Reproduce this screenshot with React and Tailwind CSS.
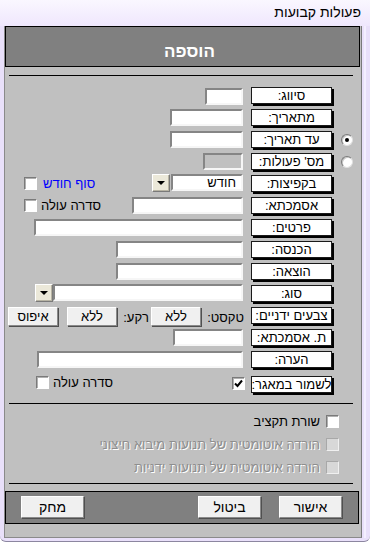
import React from 'react';

function Lbl({ children }) {
  return (
    <div className="mt-[2px] w-[81px] h-[17px] shrink-0 bg-white border border-[#1a1a1a] shadow-[2px_2px_0_#000] flex items-center justify-center text-[13px] leading-none whitespace-nowrap">
      {children}
    </div>
  );
}

function Inp({ cls = '', gray, children }) {
  return (
    <div
      className={`${cls} h-[17px] shrink-0 border-2 border-t-[#858585] border-l-[#858585] border-b-[#f6f6f6] border-r-[#f6f6f6] ${gray ? 'bg-[#c0c0c0]' : 'bg-white'} flex items-center pr-[5px] text-[13px] leading-none`}
    >
      {children}
    </div>
  );
}

function DD({ cls = '' }) {
  return (
    <div className={`${cls} w-[18px] h-[18px] shrink-0 bg-[#ebe8d9] border border-t-white border-l-white border-b-[#7a7a7a] border-r-[#7a7a7a] shadow-[inset_-1px_-1px_0_#b8b4a4] flex items-center justify-center`}>
      <div className="w-0 h-0 border-l-[4px] border-r-[4px] border-t-[4px] border-l-transparent border-r-transparent border-t-black" />
    </div>
  );
}

function Cb({ checked, disabled, cls = '' }) {
  return (
    <div
      className={`${cls} w-[13px] h-[13px] shrink-0 border ${disabled ? 'border-t-[#a8a8a8] border-l-[#a8a8a8] border-b-[#f0f0f0] border-r-[#f0f0f0] bg-[#d8d8d8]' : 'border-t-[#7a7a7a] border-l-[#7a7a7a] border-b-white border-r-white bg-white shadow-[inset_1px_1px_0_#b0b0b0]'} flex items-center justify-center`}
    >
      {checked && (
        <svg width="9" height="9" viewBox="0 0 9 9">
          <path d="M1 4.5 L3.5 7 L8 1.5" fill="none" stroke="#000" strokeWidth="2" />
        </svg>
      )}
    </div>
  );
}

function Radio({ checked }) {
  return (
    <div className="w-[12px] h-[12px] rounded-full bg-white border border-t-[#7a7a7a] border-l-[#7a7a7a] border-b-[#e0e0e0] border-r-[#e0e0e0] shadow-[inset_1px_1px_0_#c8c8c8] flex items-center justify-center">
      {checked && <div className="w-[4px] h-[4px] rounded-full bg-black" />}
    </div>
  );
}

function Btn({ cls = '', children }) {
  return (
    <div className={`${cls} shrink-0 bg-[#f0f0f0] border border-t-white border-l-white border-b-[#8a8a8a] border-r-[#8a8a8a] shadow-[1px_1px_0_#505050] flex items-center justify-center text-[13px] leading-none`}>
      {children}
    </div>
  );
}

function Row({ radio, label, children, cls = '' }) {
  return (
    <div className={`flex h-[22px] items-start ${cls}`}>
      <div className="w-[29px] h-[22px] shrink-0 flex justify-center pt-[5px]">{radio}</div>
      <Lbl>{label}</Lbl>
      {children}
    </div>
  );
}

export default function App() {
  return (
    <div className="w-[370px] h-[545px] overflow-hidden bg-white text-black font-['Liberation_Sans','DejaVu_Sans',sans-serif]">
      <div className="w-[370px] h-[542px] bg-[#e9e0fa] rounded-b-[6px] border-b border-[#8c86a0] flex flex-col">
        <div className="h-[26px] shrink-0 bg-gradient-to-b from-[#faf7ff] to-[#efe7fd] flex items-center justify-end pr-[9px] pb-[3px]">
          <span dir="rtl" className="text-[14px] leading-none">פעולות קבועות</span>
        </div>
        <div className="flex">
          <div dir="rtl" className="ml-[4px] w-[358px] h-[512px] shrink-0 bg-[#c0c0c0] border-l border-r border-b border-l-[#8a8a8a] border-r-[#7a7a7a] border-b-[#8a8a8a] flex flex-col">
            <div className="self-end w-[355px] h-[41px] shrink-0 bg-[#808080] border border-black flex items-center justify-center pt-[9px] pl-[14px]">
              <span className="text-white font-bold text-[17px] leading-none">הוספה</span>
            </div>
            <div className="self-end ml-[4px] w-[344px] h-px bg-black mt-[8px] shrink-0" />

            <div className="mt-[9px] flex flex-col">
              <Row label="סיווג:">
                <Inp cls="mt-[3px] mr-[8px] w-[38px]" />
              </Row>
              <Row label="מתאריך:">
                <Inp cls="mt-[2px] mr-[8px] w-[73px]" />
              </Row>
              <Row label="עד תאריך:" radio={<Radio checked />}>
                <Inp cls="mt-[2px] mr-[8px] w-[73px]" />
              </Row>
              <Row label="מס' פעולות:" radio={<Radio />}>
                <Inp cls="mt-[2px] mr-[8px] w-[40px]" gray />
              </Row>
              <Row label="בקפיצות:" cls="pl-[19px]">
                <Inp cls="mt-[1px] mr-[8px] w-[72px]">חודש</Inp>
                <DD cls="mt-[1px] mr-[1px]" />
                <div className="mr-auto mt-[2px] h-[17px] flex items-center gap-[6px]">
                  <span className="text-[13px] leading-none text-[#0000ff]">סוף חודש</span>
                  <Cb />
                </div>
              </Row>
              <Row label="אסמכתא:" cls="pl-[19px]">
                <Inp cls="mt-[2px] mr-[8px] w-[111px]" />
                <div className="mr-auto mt-[2px] h-[17px] flex items-center gap-[4px]">
                  <span className="text-[13px] leading-none">סדרה עולה</span>
                  <Cb />
                </div>
              </Row>
              <Row label="פרטים:">
                <Inp cls="mt-[2px] mr-[8px] w-[209px]" />
              </Row>
              <Row label="הכנסה:">
                <Inp cls="mt-[2px] mr-[8px] w-[127px]" />
              </Row>
              <Row label="הוצאה:">
                <Inp cls="mt-[2px] mr-[8px] w-[127px]" />
              </Row>
              <Row label="סוג:">
                <Inp cls="mt-[1px] mr-[8px] w-[190px]" />
                <DD cls="mt-[1px]" />
              </Row>
              <Row label="צבעים ידניים:">
                <div className="mt-[2px] mr-[7px] w-[42px] h-[20px] shrink-0 flex items-center text-[13px] leading-none">טקסט:</div>
                <Btn cls="mt-[2px] mr-[1px] w-[50px] h-[19px]">ללא</Btn>
                <div className="mt-[2px] mr-[2px] w-[31px] h-[20px] shrink-0 flex items-center text-[13px] leading-none">רקע:</div>
                <Btn cls="mt-[2px] mr-[1px] w-[50px] h-[19px]">ללא</Btn>
                <Btn cls="mt-[2px] mr-[9px] w-[50px] h-[19px]">איפוס</Btn>
              </Row>
              <Row label="ת. אסמכתא:">
                <Inp cls="mt-[2px] mr-[8px] w-[70px]" />
              </Row>
              <Row label="הערה:">
                <Inp cls="mt-[2px] mr-[8px] w-[206px]" />
              </Row>
              <Row label="לשמור במאגר:" cls="mt-[3px] pl-[31px]">
                <Cb checked cls="mt-[3px] mr-[6px]" />
                <div className="mr-auto mt-[1px] h-[15px] flex items-center gap-[4px]">
                  <span className="text-[13px] leading-none">סדרה עולה</span>
                  <Cb />
                </div>
              </Row>
            </div>

            <div className="self-end ml-[4px] w-[344px] h-px bg-black mt-[7px] shrink-0" />

            <div className="mt-[6px] flex flex-col pr-[22px]">
              <div className="h-[23px] flex items-center gap-[6px]">
                <Cb />
                <span className="text-[13px] leading-none">שורת תקציב</span>
              </div>
              <div className="h-[23px] flex items-center gap-[6px]">
                <Cb disabled />
                <span className="text-[13px] leading-none text-[#8e8e8e] [text-shadow:1px_1px_0_#ffffff]">הורדה אוטומטית של תנועות מיבוא חיצוני</span>
              </div>
              <div className="h-[23px] flex items-center gap-[6px]">
                <Cb disabled />
                <span className="text-[13px] leading-none text-[#8e8e8e] [text-shadow:1px_1px_0_#ffffff]">הורדה אוטומטית של תנועות ידניות</span>
              </div>
            </div>

            <div className="self-end ml-[4px] w-[344px] h-px bg-black mt-[4px] shrink-0" />

            <div className="self-end w-[354px] h-[33px] mt-[7px] shrink-0 bg-[#808080] border border-black flex items-start pt-[4px] pr-[16px] pl-[15px]">
              <Btn cls="w-[63px] h-[22px] text-[14px]">אישור</Btn>
              <Btn cls="mr-[18px] w-[63px] h-[22px] text-[14px]">ביטול</Btn>
              <Btn cls="mr-auto w-[63px] h-[22px] text-[14px]">מחק</Btn>
            </div>
          </div>
          <div className="ml-[2px] w-[2px] h-[512px] bg-[#f4efff]" />
        </div>
      </div>
    </div>
  );
}
